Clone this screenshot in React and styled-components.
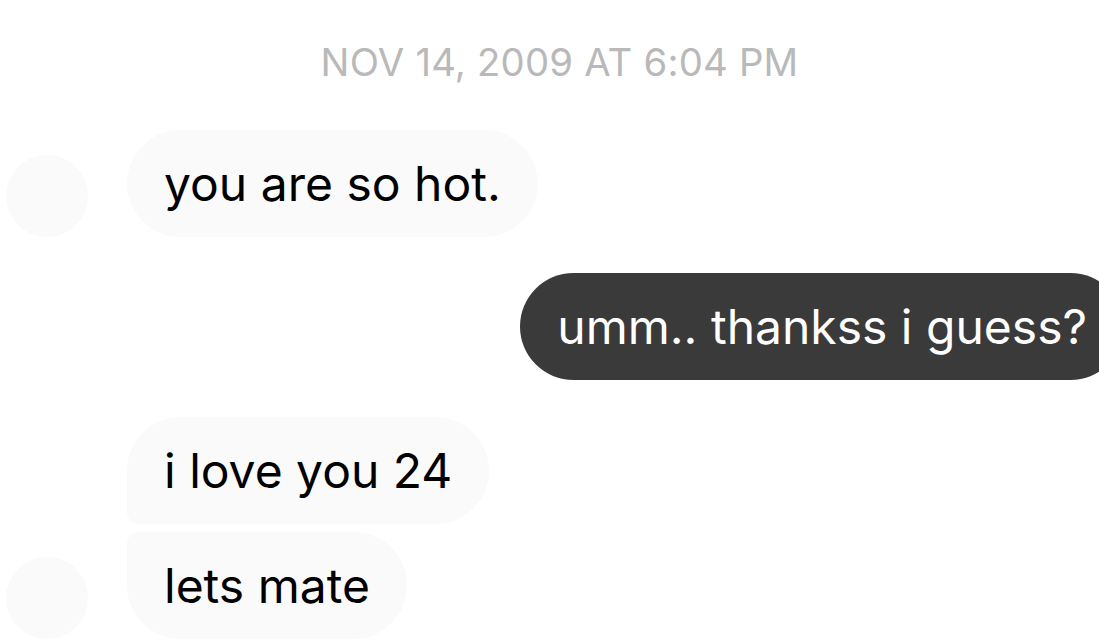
import React from "react";
import styled, { createGlobalStyle } from "styled-components";

const GlobalStyle = createGlobalStyle`
  html, body {
    margin: 0;
    padding: 0;
    background: #ffffff;
    overflow: hidden;
  }
  body {
    font-family: Inter, "Liberation Sans", Arial, sans-serif;
    -webkit-font-smoothing: antialiased;
  }
`;

const messages = [
  { id: 1, text: "you are so hot.", mine: false, avatar: true, gapTop: 44 },
  { id: 2, text: "umm.. thankss i guess?", mine: true, gapTop: 36 },
  { id: 3, text: "i love you 24", mine: false, avatar: false, gapTop: 37, joinBottom: true },
  { id: 4, text: "lets mate", mine: false, avatar: true, gapTop: 8, joinTop: true },
];

export default function App() {
  return (
    <Screen>
      <GlobalStyle />
      <Stamp>NOV 14, 2009 AT 6:04 PM</Stamp>
      {messages.map(m =>
        m.mine ? (
          <Row key={m.id} $mine $gap={m.gapTop}>
            <Bubble $mine>{m.text}</Bubble>
          </Row>
        ) : (
          <Row key={m.id} $gap={m.gapTop}>
            <Avatar $hidden={!m.avatar} />
            <Bubble $joinTop={m.joinTop} $joinBottom={m.joinBottom}>
              {m.text}
            </Bubble>
          </Row>
        )
      )}
    </Screen>
  );
}

const Screen = styled.div`
  width: 1099px;
  height: 641px;
  overflow: hidden;
  display: flex;
  flex-direction: column;
  padding-top: 38px;
  box-sizing: border-box;
`;

const Stamp = styled.div`
  text-align: center;
  font-size: 38.3px;
  line-height: 48px;
  color: #b9b9b9;
  margin-left: 20px;
  letter-spacing: 0.2px;
`;

const Row = styled.div`
  display: flex;
  align-items: flex-end;
  justify-content: ${p => (p.$mine ? "flex-end" : "flex-start")};
  margin-top: ${p => p.$gap}px;
  padding-left: 6px;
  margin-right: ${p => (p.$mine ? "-25px" : "0")};
`;

const Avatar = styled.div`
  width: 82px;
  height: 82px;
  border-radius: 50%;
  background: #fafafa;
  margin-right: 39px;
  flex-shrink: 0;
  visibility: ${p => (p.$hidden ? "hidden" : "visible")};
`;

const Bubble = styled.div`
  height: 107px;
  box-sizing: border-box;
  display: flex;
  align-items: center;
  padding: 0 37px;
  font-size: 48px;
  white-space: nowrap;
  border-radius: 54px;
  border-top-left-radius: ${p => (p.$joinTop ? "12px" : "54px")};
  border-bottom-left-radius: ${p => (p.$joinBottom ? "12px" : "54px")};
  background: ${p => (p.$mine ? "#3a3a3a" : "#fafafa")};
  color: ${p => (p.$mine ? "#ffffff" : "#000000")};
  flex-shrink: 0;
`;
